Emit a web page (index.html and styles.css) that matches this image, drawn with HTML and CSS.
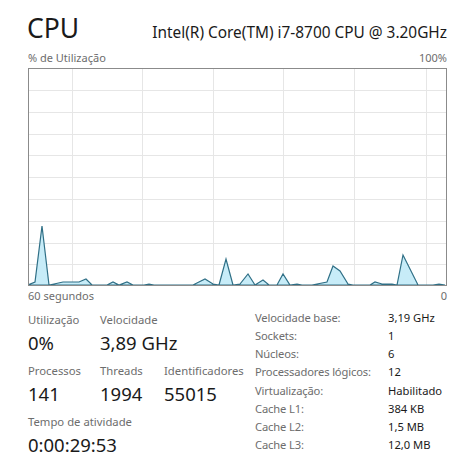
FILE: index.html
```html
<!DOCTYPE html>
<html lang="pt">
<head>
<meta charset="utf-8">
<link rel="stylesheet" href="styles.css">
</head>
<body>
<div class="page">
  <header class="head">
    <h1 class="title">CPU</h1>
    <div class="model">Intel(R) Core(TM) i7-8700 CPU @ 3.20GHz</div>
  </header>
  <div class="axis top"><span>% de Utilização</span><span>100%</span></div>
  <svg class="chart" width="419" height="218" viewBox="0 0 419 218">
    <g class="grid">
      <line x1="44.5" y1="0" x2="44.5" y2="218"/>
      <line x1="114.5" y1="0" x2="114.5" y2="218"/>
      <line x1="185.5" y1="0" x2="185.5" y2="218"/>
      <line x1="255.5" y1="0" x2="255.5" y2="218"/>
      <line x1="326.5" y1="0" x2="326.5" y2="218"/>
      <line x1="398.5" y1="0" x2="398.5" y2="218"/>
      <line x1="0" y1="22.5" x2="419" y2="22.5"/>
      <line x1="0" y1="44.5" x2="419" y2="44.5"/>
      <line x1="0" y1="66.5" x2="419" y2="66.5"/>
      <line x1="0" y1="87.5" x2="419" y2="87.5"/>
      <line x1="0" y1="109.5" x2="419" y2="109.5"/>
      <line x1="0" y1="131.5" x2="419" y2="131.5"/>
      <line x1="0" y1="153.5" x2="419" y2="153.5"/>
      <line x1="0" y1="175.5" x2="419" y2="175.5"/>
      <line x1="0" y1="196.5" x2="419" y2="196.5"/>
    </g>
    <polygon class="area" points="0,217 7,214 14,158 21,217 26,216 35,214 51,214 58,211 64,217 79,217 85,214 91,217 99,214 105,217 116,217 121,216 126,217 165,217 177,211 185,216 191,217 198,191 205,217 212,216 220,206 227,217 235,212 241,217 249,217 255,206 262,217 269,216 274,217 284,217 299,214 305,198 312,203 320,216 325,217 342,217 347,214 354,216 364,216 369,217 375,187 390,217 405,217 411,216 417,217"/>
    <rect class="frame" x="0.5" y="0.5" width="418" height="217"/>
  </svg>
  <div class="axis bottom"><span>60 segundos</span><span>0</span></div>
  <section class="stats">
    <div class="left">
      <div class="stat"><div class="lbl">Utilização</div><div class="val">0%</div></div>
      <div class="stat span2"><div class="lbl">Velocidade</div><div class="val">3,89 GHz</div></div>
      <div class="stat"><div class="lbl">Processos</div><div class="val">141</div></div>
      <div class="stat"><div class="lbl">Threads</div><div class="val">1994</div></div>
      <div class="stat"><div class="lbl">Identificadores</div><div class="val">55015</div></div>
      <div class="stat span3"><div class="lbl">Tempo de atividade</div><div class="val">0:00:29:53</div></div>
    </div>
    <dl class="info">
      <dt>Velocidade base:</dt><dd>3,19 GHz</dd>
      <dt>Sockets:</dt><dd>1</dd>
      <dt>Núcleos:</dt><dd>6</dd>
      <dt>Processadores lógicos:</dt><dd>12</dd>
      <dt>Virtualização:</dt><dd>Habilitado</dd>
      <dt>Cache L1:</dt><dd>384 KB</dd>
      <dt>Cache L2:</dt><dd>1,5 MB</dd>
      <dt>Cache L3:</dt><dd>12,0 MB</dd>
    </dl>
  </section>
</div>
</body>
</html>
```
FILE: styles.css
```css
html, body {
  margin: 0;
  padding: 0;
  background: #ffffff;
}
body {
  font-family: "Noto Sans", "Open Sans", "DejaVu Sans", sans-serif;
  color: #1a1a1a;
}
.page {
  width: 419px;
  padding: 10px 0 0 28px;
}
.head {
  display: flex;
  justify-content: space-between;
  align-items: baseline;
  height: 40px;
}
.title {
  margin: 0;
  font-weight: 400;
  font-size: 26.5px;
  line-height: 36px;
  margin-left: -1px;
}
.model {
  font-size: 15.4px;
  line-height: 20px;
}
.axis {
  display: flex;
  justify-content: space-between;
  font-size: 11px;
  color: #6d6d6d;
  line-height: 16px;
}
.axis.top {
  height: 18px;
}
.chart {
  display: block;
}
.grid line {
  stroke: #e6e6e6;
  stroke-width: 1;
}
.area {
  fill: #c7ecf8;
  stroke: #2f6f86;
  stroke-width: 1.2;
  stroke-linejoin: miter;
}
.frame {
  fill: none;
  stroke: #8b8b8b;
  stroke-width: 1;
}
.axis.bottom {
  font-size: 11px;
  line-height: 20px;
  height: 22px;
}
.stats {
  display: flex;
  margin-top: 3px;
}
.left {
  display: grid;
  grid-template-columns: 72px 64px 1fr;
  width: 227px;
  row-gap: 5px;
  align-content: start;
}
.span2 { grid-column: span 2; }
.span3 { grid-column: span 3; }
.lbl {
  font-size: 11.3px;
  line-height: 18px;
  color: #6d6d6d;
}
.val {
  font-size: 18.5px;
  line-height: 28px;
  color: #1a1a1a;
}
.info {
  display: grid;
  grid-template-columns: 133px auto;
  grid-auto-rows: 18.15px;
  margin: -2px 0 0 0;
  font-size: 11.2px;
  line-height: 18px;
}
.info dt {
  color: #6d6d6d;
  letter-spacing: -0.15px;
}
.info dd {
  margin: 0;
  color: #1a1a1a;
}
```
